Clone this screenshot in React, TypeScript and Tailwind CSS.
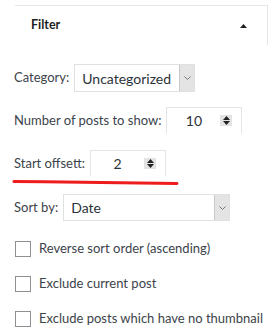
import React from 'react'

const font = { fontFamily: 'Lato, "Noto Sans", sans-serif' }

function Spinner() {
  return (
    <div className="flex h-[11px] w-[12px] flex-col items-center justify-center gap-[1px] bg-[#e3e3e3]">
      <svg width="7" height="4" viewBox="0 0 7 4"><path d="M0 4 L3.5 0 L7 4 Z" fill="#222" /></svg>
      <svg width="7" height="4" viewBox="0 0 7 4"><path d="M0 0 L3.5 4 L7 0 Z" fill="#222" /></svg>
    </div>
  )
}

function Chevron() {
  return (
    <div className="flex h-full w-[15px] items-center justify-center border-l border-[#c8c8c8] bg-[#e4e4e4]">
      <svg width="7" height="4" viewBox="0 0 7 4"><path d="M0.5 0.5 L3.5 3.5 L6.5 0.5" fill="none" stroke="#777" strokeWidth="1" /></svg>
    </div>
  )
}

function Select({ value, className }: { value: string; className: string }) {
  return (
    <div className={`flex items-stretch border border-[#e0e0e0] bg-white ${className}`}>
      <div className="flex flex-1 items-center pl-[7px] text-[14px] text-[#2c3338]">{value}</div>
      <Chevron />
    </div>
  )
}

function NumberInput({ value }: { value: string }) {
  return (
    <div className="flex h-[27px] w-[76px] items-center border border-[#e4e4e4] border-b-white bg-white">
      <div className="flex-1 text-center text-[14px] text-[#2c3338]">{value}</div>
      <div className="mr-[9px]"><Spinner /></div>
    </div>
  )
}

function Check({ label }: { label: string }) {
  return (
    <div className="flex h-[16px] items-center">
      <div className="h-[16px] w-[16px] border border-[#8c8f94] bg-white" />
      <span className="ml-[8px] text-[13px] text-[#3c434a]">{label}</span>
    </div>
  )
}

export default function App() {
  return (
    <div className="relative h-[333px] w-[280px] overflow-hidden bg-white" style={font}>
      {/* Panel header */}
      <div className="ml-[15px] mt-[5px] flex h-[40px] w-[253px] items-center justify-between border-r border-t border-[#e5e5e5] pl-[16px] pr-[20px]">
        <span className="text-[12.5px] font-bold text-[#1e1e1e]">Filter</span>
        <svg width="7" height="4" viewBox="0 0 7 4"><path d="M0 4 L3.5 0 L7 4 Z" fill="#1e1e1e" /></svg>
      </div>

      <div className="pl-[14px] text-[13px] text-[#3c434a]">
        <div className="mt-[19px] flex items-center gap-[5px]">
          <span>Category:</span>
          <Select value="Uncategorized" className="h-[28px] w-[121px]" />
        </div>

        <div className="mt-[15px] flex items-center gap-[5px]">
          <span>Number of posts to show:</span>
          <NumberInput value="10" />
        </div>

        <div className="mt-[16px] flex items-center gap-[5px]">
          <span>Start offsett:</span>
          <NumberInput value="2" />
        </div>

        <div className="mt-[17px] flex items-center gap-[5px]">
          <span>Sort by:</span>
          <Select value="Date" className="h-[27px] w-[167px]" />
        </div>

        <div className="ml-[1px] mt-[20px] flex flex-col gap-[19px]">
          <Check label="Reverse sort order (ascending)" />
          <Check label="Exclude current post" />
          <Check label="Exclude posts which have no thumbnail" />
        </div>
      </div>

      {/* hand-drawn red underline annotation */}
      <svg className="absolute left-[11px] top-[178px]" width="170" height="8" viewBox="0 0 170 8">
        <path d="M3 3.5 C 60 4, 120 5, 166 5.5" fill="none" stroke="#ee1c1c" strokeWidth="3" strokeLinecap="round" />
      </svg>
    </div>
  )
}
